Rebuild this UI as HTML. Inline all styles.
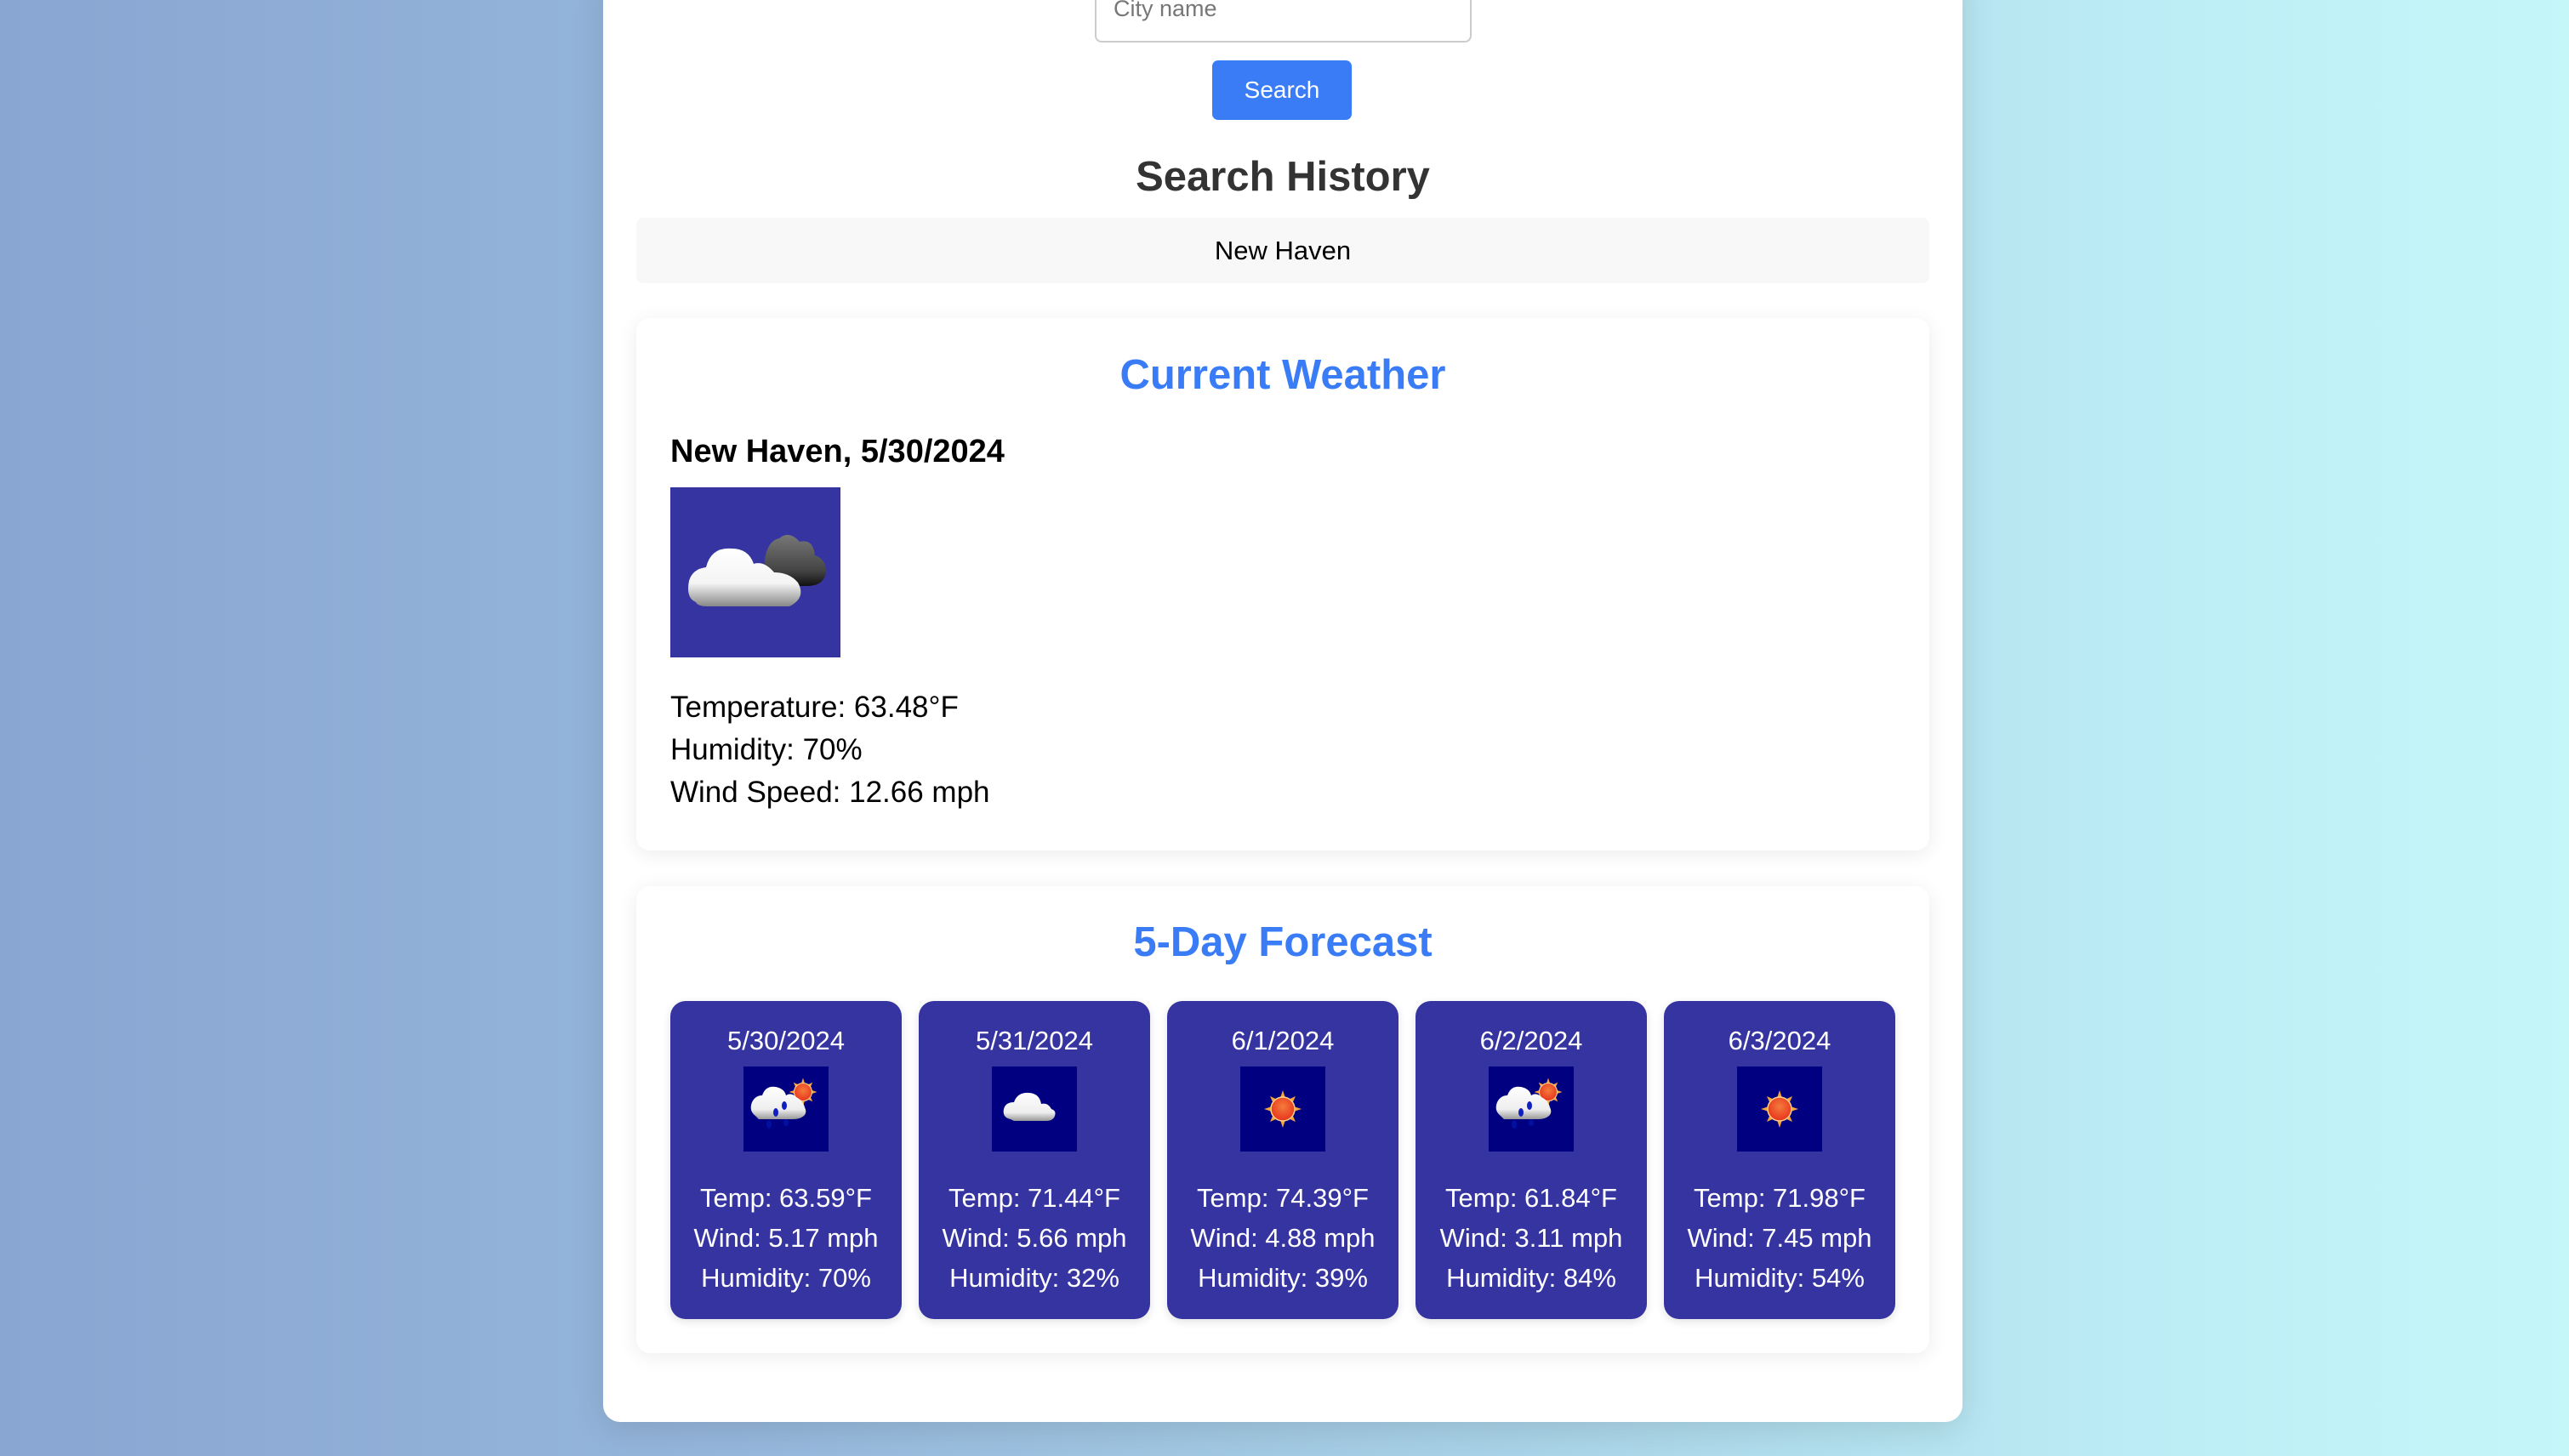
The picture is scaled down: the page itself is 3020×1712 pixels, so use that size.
<!DOCTYPE html>
<html><head><meta charset="utf-8"><style>
*{box-sizing:border-box;margin:0;padding:0}
html,body{width:3020px;height:1712px;overflow:hidden}
body{font-family:"Liberation Sans",Arial,sans-serif;background:linear-gradient(to right,#89a5d2 0%,#96b8dc 30%,#aad4e8 60%,#bdeef6 85%,#c5f7f9 100%);position:relative}
.wrap{position:absolute;left:709px;top:-40px;width:1598px;height:1712px;background:#fff;border-radius:20px;box-shadow:0 8px 40px rgba(0,0,0,0.12)}
.abs{position:absolute}
.input{left:1287px;top:-10px;width:443px;height:60px;border:2px solid #ccc;border-radius:8px;background:#fff;font-size:27px;color:#777;padding:0 0 0 20px;line-height:36px}
.btn{left:1425px;top:71px;width:164px;height:70px;background:#3a7cf6;border-radius:7px;color:#fff;font-size:28px;text-align:center;line-height:70px}
.h2{left:709px;width:1598px;text-align:center;font-weight:bold;font-size:49px}
.hist{left:748px;top:256px;width:1520px;height:77px;background:#f8f8f8;border-radius:8px;text-align:center;line-height:77px;font-size:31px;color:#000}
.card{left:748px;width:1520px;background:#fff;border-radius:16px;box-shadow:0 4px 24px rgba(0,0,0,0.08)}
.txt{font-size:35px;color:#000;line-height:50px}
.day{position:absolute;top:1177px;width:272px;height:374px;background:#3634a0;border-radius:18px;color:#fff;text-align:center;box-shadow:0 3px 10px rgba(0,0,0,0.12)}
.day .d{position:absolute;top:29px;left:0;right:0;font-size:31px}
.day .ic{position:absolute;top:77px;left:86px;width:100px;height:100px;background:#000080}
.day .t{position:absolute;top:208px;left:0;right:0;font-size:31px;line-height:47px}
</style></head><body>
<div class="wrap"></div>
<div class="abs input">City name</div>
<div class="abs btn">Search</div>
<div class="abs h2" style="top:180px;color:#333">Search History</div>
<div class="abs hist">New Haven</div>
<div class="abs card" style="top:374px;height:626px"></div>
<div class="abs h2" style="top:413px;color:#3a7cf6">Current Weather</div>
<div class="abs" style="left:788px;top:510px;font-size:38px;font-weight:bold;color:#000">New Haven, 5/30/2024</div>
<div class="abs" style="left:788px;top:573px;width:200px;height:200px;background:#3634a0">
<svg width="200" height="200" viewBox="0 0 200 200">
<defs><linearGradient id="wc" x1="0" y1="0" x2="0" y2="1"><stop offset="0" stop-color="#fff"/><stop offset=".6" stop-color="#f4f4f4"/><stop offset="1" stop-color="#888"/></linearGradient>
<linearGradient id="dc" x1="0" y1="0" x2="0" y2="1"><stop offset="0" stop-color="#777"/><stop offset=".7" stop-color="#444"/><stop offset="1" stop-color="#111"/></linearGradient></defs>
<path d="M110 110 Q108 64 128 60 Q140 50 152 64 Q168 60 170 80 Q186 86 182 104 Q178 116 160 116 L120 116Z" fill="url(#dc)"/>
<path d="M30 135 Q18 130 22 110 Q26 96 42 94 Q48 70 72 72 Q92 72 98 90 Q110 86 122 100 Q140 100 150 112 Q160 130 140 140 L44 140 Q32 140 30 135Z" fill="url(#wc)"/>
</svg></div>
<div class="abs txt" style="left:788px;top:807px">Temperature: 63.48°F<br>Humidity: 70%<br>Wind Speed: 12.66 mph</div>
<div class="abs card" style="top:1042px;height:549px"></div>
<div class="abs h2" style="top:1080px;color:#3a7cf6">5-Day Forecast</div>

<svg width="0" height="0" style="position:absolute"><defs>
<radialGradient id="sun" cx=".5" cy=".4" r=".6"><stop offset="0" stop-color="#f47c3c"/><stop offset="1" stop-color="#e8331d"/></radialGradient>
<linearGradient id="cl" x1="0" y1="0" x2="0" y2="1"><stop offset="0" stop-color="#fff"/><stop offset=".7" stop-color="#eee"/><stop offset="1" stop-color="#999"/></linearGradient>
<g id="sunico"><polygon points="50,28 54,40 65,35 60,46 72,50 60,54 65,65 54,60 50,72 46,60 35,65 40,54 28,50 40,46 35,35 46,40" fill="#f5a23a"/><circle cx="50" cy="50" r="14" fill="url(#sun)" stroke="#fbd38a" stroke-width="1.5"/></g>
<g id="cloud"><path d="M22 62 Q12 60 14 50 Q16 42 26 42 Q30 30 44 31 Q56 32 58 44 Q66 42 70 50 Q76 52 74 58 Q72 64 64 64 L26 64Z" fill="url(#cl)"/></g>
<g id="rain"><use href="#sunico" transform="translate(70,30) scale(0.75) translate(-50,-50)"/><path d="M14 58 Q6 52 10 42 Q14 34 22 34 Q26 22 38 24 Q48 26 50 34 Q56 30 62 36 Q70 40 72 48 Q76 56 68 60 Q64 62 58 62 L18 62Z" fill="url(#cl)"/><ellipse cx="38" cy="54" rx="3" ry="5" fill="#1020c0"/><ellipse cx="48" cy="46" rx="3" ry="5" fill="#1020c0"/><ellipse cx="30" cy="68" rx="3" ry="5" fill="#0010a0"/><ellipse cx="50" cy="66" rx="3" ry="4" fill="#0010a0"/></g>
</defs></svg>

<div class="day" style="left:788px"><div class="d">5/30/2024</div><div class="ic"><svg width="100" height="100" viewBox="0 0 100 100"><use href="#rain"/></svg></div><div class="t">Temp: 63.59°F<br>Wind: 5.17 mph<br>Humidity: 70%</div></div>
<div class="day" style="left:1080px"><div class="d">5/31/2024</div><div class="ic"><svg width="100" height="100" viewBox="0 0 100 100"><use href="#cloud"/></svg></div><div class="t">Temp: 71.44°F<br>Wind: 5.66 mph<br>Humidity: 32%</div></div>
<div class="day" style="left:1372px"><div class="d">6/1/2024</div><div class="ic"><svg width="100" height="100" viewBox="0 0 100 100"><use href="#sunico"/></svg></div><div class="t">Temp: 74.39°F<br>Wind: 4.88 mph<br>Humidity: 39%</div></div>
<div class="day" style="left:1664px"><div class="d">6/2/2024</div><div class="ic"><svg width="100" height="100" viewBox="0 0 100 100"><use href="#rain"/></svg></div><div class="t">Temp: 61.84°F<br>Wind: 3.11 mph<br>Humidity: 84%</div></div>
<div class="day" style="left:1956px"><div class="d">6/3/2024</div><div class="ic"><svg width="100" height="100" viewBox="0 0 100 100"><use href="#sunico"/></svg></div><div class="t">Temp: 71.98°F<br>Wind: 7.45 mph<br>Humidity: 54%</div></div>
</body></html>
